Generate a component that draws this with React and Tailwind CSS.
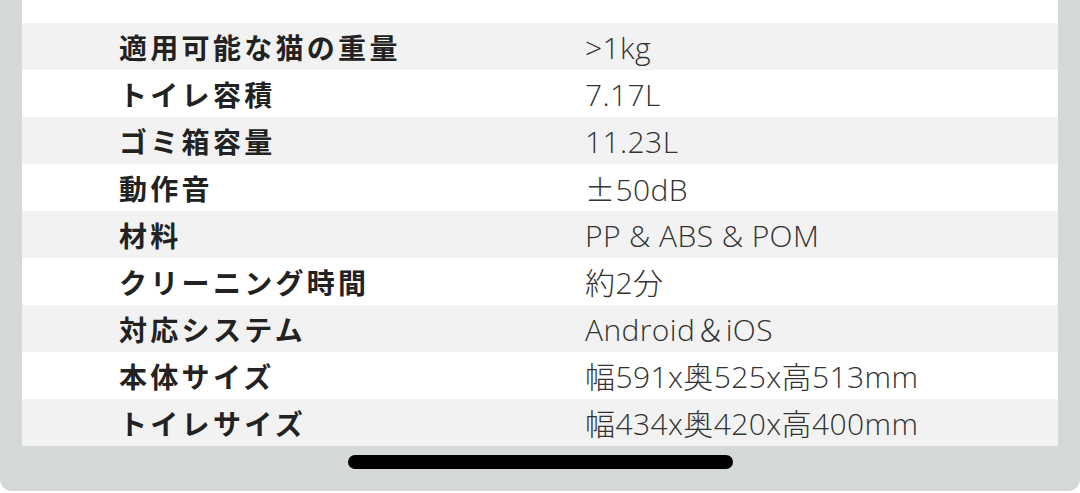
const rows = [
  ["適用可能な猫の重量", ">1kg"],
  ["トイレ容積", "7.17L"],
  ["ゴミ箱容量", "11.23L"],
  ["動作音", "pm"],
  ["材料", "PP & ABS & POM"],
  ["クリーニング時間", "約2分"],
  ["対応システム", "Android＆iOS"],
  ["本体サイズ", "幅591x奥525x高513mm"],
  ["トイレサイズ", "幅434x奥420x高400mm"],
];

export default function App() {
  return (
    <div className="w-[1080px] h-[493px] bg-white overflow-hidden">
      <div className="h-[491px] bg-[#d6d9da] rounded-b-[12px] px-[22px] flex flex-col">
        <div className="bg-white flex flex-col">
          <div className="h-[23px]" />
          {rows.map(([k, v], i) => (
            <div
              key={i}
              className={`h-[47px] flex items-center ${i % 2 === 0 ? "bg-[#f2f2f2]" : "bg-white"}`}
            >
              <div
                className="w-[563px] pl-[97px] text-[28px] font-bold text-[#222] tracking-[3.3px] leading-none"
                style={{ fontFamily: '"Noto Sans CJK JP", "Noto Sans", sans-serif' }}
              >
                {k}
              </div>
              <div
                className="text-[30px] font-light text-[#333] tracking-[0.4px] leading-none pt-[2px]"
                style={{ fontFamily: '"Open Sans", "Noto Sans CJK JP", sans-serif' }}
              >
                {v === "pm" ? (
                  <>
                    <span style={{ fontFamily: '"Noto Sans CJK JP", sans-serif' }} className="font-light">±</span>
                    50dB
                  </>
                ) : (
                  v
                )}
              </div>
            </div>
          ))}
        </div>
        <div className="flex-1 flex justify-center pt-[9px]">
          <div className="w-[385px] h-[14px] rounded-full bg-black" />
        </div>
      </div>
    </div>
  );
}
